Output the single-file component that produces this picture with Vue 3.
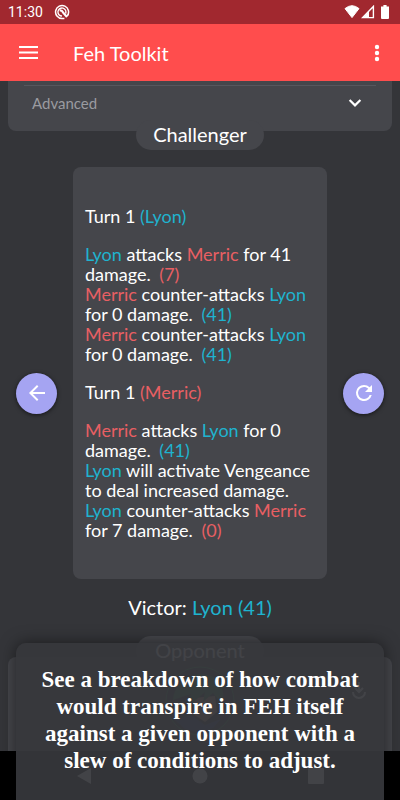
<script setup>
import { ref } from 'vue'

const challenger = 'Lyon'
const opponent = 'Merric'

const turns = ref([
  {
    id: 1,
    owner: challenger,
    actions: [
      { from: challenger, verb: 'attacks', to: opponent, damage: 41, left: opponent, hp: 7 },
      { from: opponent, verb: 'counter-attacks', to: challenger, damage: 0, left: challenger, hp: 41 },
      { from: opponent, verb: 'counter-attacks', to: challenger, damage: 0, left: challenger, hp: 41 }
    ]
  },
  {
    id: 2,
    owner: opponent,
    actions: [
      { from: opponent, verb: 'attacks', to: challenger, damage: 0, left: challenger, hp: 41 },
      { from: challenger, skill: 'Vengeance' },
      { from: challenger, verb: 'counter-attacks', to: opponent, damage: 7, left: opponent, hp: 0 }
    ]
  }
])

function heroClass(name) {
  return name === challenger ? 'ally' : 'foe'
}
</script>

<template>
  <div class="screen">
    <div class="status-bar">
      <span class="clock">11:30</span>
      <svg class="status-app" viewBox="0 0 16 16" width="16" height="16" fill="none" stroke="#fff">
        <path d="M13.2 12A6.5 6.5 0 1 0 8 14.5h2.4" stroke-width="1.5" />
        <path d="M11.6 9.6A4 4 0 1 0 8 12" stroke-width="1.4" />
        <path d="M5.6 6.4Q8 6 9 8.4L13 13" stroke-width="2.2" />
      </svg>
      <div class="status-icons">
        <svg viewBox="0 0 16 14" width="16" height="14" fill="#fff">
          <path d="M1 3.6Q8-2.2 15 3.6L8 12.6z" stroke="#fff" stroke-linejoin="round" />
        </svg>
        <svg viewBox="0 0 14 14" width="14" height="14" fill="none" stroke="#fff">
          <path d="M1.6 12.6h10.8V1.4z" stroke-width="1.4" />
          <path d="M8 12.6V6.2L2 12.6z" fill="#fff" stroke="none" />
        </svg>
        <svg class="battery" viewBox="0 0 8 14" width="8" height="14" fill="#fff">
          <path d="M2.4 0h3.2v1.6H8V13a1 1 0 0 1-1 1H1a1 1 0 0 1-1-1V1.6h2.4z" />
        </svg>
      </div>
    </div>

    <header class="app-bar">
      <button class="icon-button" aria-label="Menu">
        <svg viewBox="0 0 20 14" width="20" height="14" fill="#fff">
          <path d="M1 0h19v2H1zM1 5.5h19v2H1zM1 11h19v2H1z" />
        </svg>
      </button>
      <h1>Feh Toolkit</h1>
      <button class="icon-button" aria-label="More options">
        <svg viewBox="0 0 6 18" width="6" height="18" fill="#fff">
          <circle cx="3" cy="3" r="2.2" />
          <circle cx="3" cy="9" r="2.2" />
          <circle cx="3" cy="15" r="2.2" />
        </svg>
      </button>
    </header>

    <main>
      <section class="panel">
        <button class="advanced">
          <span>Advanced</span>
          <svg viewBox="0 0 14 10" width="14" height="10" fill="none" stroke="#fff" stroke-width="2.2">
            <path d="M1.6 2L7 7.4L12.4 2" />
          </svg>
        </button>
      </section>
      <h2 class="pill">Challenger</h2>

      <div class="battle">
        <button class="round-button" aria-label="Back">
          <svg viewBox="0 0 24 24" width="24" height="24" fill="#fff">
            <path d="M20 11H7.8l5.6-5.6L12 4l-8 8 8 8 1.4-1.4L7.8 13H20z" />
          </svg>
        </button>

        <div class="log">
          <div v-for="turn in turns" :key="turn.id" class="turn">
            <h3>Turn 1 <span :class="heroClass(turn.owner)">({{ turn.owner }})</span></h3>
            <p v-for="(action, i) in turn.actions" :key="i">
              <span :class="heroClass(action.from)">{{ action.from }}</span>
              <template v-if="action.skill">{{ ` will activate ${action.skill} to deal increased damage.` }}</template>
              <template v-else>
                {{ ` ${action.verb} ` }}
                <span :class="heroClass(action.to)">{{ action.to }}</span>
                for {{ action.damage }} damage.
                <span class="result" :class="heroClass(action.left)">({{ action.hp }})</span>
              </template>
            </p>
          </div>
        </div>

        <button class="round-button" aria-label="Restart">
          <svg viewBox="0 0 24 24" width="24" height="24" fill="#fff">
            <path d="M17.65 6.35A7.96 7.96 0 0 0 12 4a8 8 0 1 0 7.73 10h-2.08A6 6 0 1 1 12 6c1.66 0 3.14.69 4.22 1.78L13 11h7V4z" />
          </svg>
        </button>
      </div>

      <p class="victor">Victor: <span class="ally">Lyon (41)</span></p>

      <section class="panel opponent-panel">
        <h2 class="pill">Opponent</h2>
        <div class="opponent-row">
          <svg class="portrait" viewBox="0 0 70 70" width="70" height="70">
            <circle cx="35" cy="35" r="34" fill="#3c3d42" stroke="#3c9a58" stroke-width="1" />
            <path d="M28 32l22-2 2 16-12 10-12-8z" fill="#c89a84" />
            <path d="M8 34C10 14 30 4 46 10c12 5 14 18 11 28L48 27 38 36l2-10-16 14 2-12z" fill="#3f8a50" />
            <path d="M10 54l16-5 14 10 16-6-8 9-14 5-14-4z" fill="#3a4f88" />
          </svg>
          <svg class="download" viewBox="0 0 14 18" width="14" height="18" fill="none" stroke="#fff" stroke-width="2">
            <path d="M7 0v10M3 6l4 4 4-4M1 10a6 6 0 0 0 12 0" />
          </svg>
        </div>
      </section>
    </main>

    <nav class="nav-bar">
      <button aria-label="Navigate back">
        <svg viewBox="0 0 16 16" width="16" height="16" fill="#fff"><path d="M15 0v16L1 8z" /></svg>
      </button>
      <button aria-label="Home">
        <svg viewBox="0 0 16 16" width="16" height="16" fill="#fff"><circle cx="8" cy="8" r="7.5" /></svg>
      </button>
      <button aria-label="Recent apps">
        <svg viewBox="0 0 16 16" width="16" height="16" fill="#fff"><rect width="16" height="16" rx="1" /></svg>
      </button>
    </nav>

    <aside class="caption">
      <p>See a breakdown of how combat would transpire in FEH itself against a given opponent with a slew of conditions to adjust.</p>
    </aside>
  </div>
</template>

<style>
body {
  margin: 0;
  background-color: #343539;
}
</style>

<style scoped>
.screen {
  position: relative;
  display: flex;
  flex-direction: column;
  min-height: 100vh;
  overflow: hidden;
  background-color: #343539;
  color: #fff;
  font-family: Lato, 'Liberation Sans', sans-serif;
}

h1,
h2,
h3,
p {
  margin: 0;
  font-weight: normal;
}

button {
  display: flex;
  align-items: center;
  justify-content: center;
  padding: 0;
  border: none;
  background: none;
  color: inherit;
  font-family: inherit;
  cursor: pointer;
}

.status-bar {
  display: flex;
  align-items: center;
  height: 24px;
  padding: 0 11px 0 8px;
  background-color: #a1282f;
}

.clock {
  font-family: Roboto, sans-serif;
  font-size: 14px;
}

.status-app {
  margin-left: 11px;
}

.status-icons {
  display: flex;
  align-items: center;
  gap: 1px;
  margin-left: auto;
}

.battery {
  margin-left: 5px;
}

.app-bar {
  display: flex;
  align-items: center;
  height: 57px;
  padding: 0 8px;
  background-color: #ff4d4d;
}

.icon-button {
  width: 40px;
  height: 40px;
}

.icon-button:last-child {
  width: 30px;
}

.app-bar h1 {
  flex: 1;
  padding-left: 25px;
  font-size: 20px;
}

main {
  display: flex;
  flex: 1;
  flex-direction: column;
}

.panel {
  margin: 0 8px;
  padding: 4px 16px 12px;
  border-radius: 0 0 8px 8px;
  background-color: #45464b;
}

.advanced {
  width: 100%;
  height: 34px;
  justify-content: space-between;
  padding: 0 14px 0 8px;
  border-top: 1px solid #56575d;
  color: #9a9ba0;
  font-size: 15px;
}

.pill {
  align-self: center;
  min-width: 128px;
  height: 30px;
  box-sizing: border-box;
  margin-top: -11px;
  border-radius: 15px;
  background-color: #45464b;
  font-size: 20px;
  line-height: 28px;
  text-align: center;
}

.battle {
  display: flex;
  align-items: center;
  gap: 16px;
  margin-top: 17px;
  padding: 0 16px;
}

.round-button {
  flex: none;
  width: 41px;
  height: 41px;
  margin-top: 40px;
  border-radius: 50%;
  background-color: #a5a4f2;
  box-shadow: 0 1px 4px rgba(0, 0, 0, 0.6);
}

.log {
  display: flex;
  flex: 1;
  flex-direction: column;
  gap: 18px;
  padding: 39px 12px;
  border-radius: 8px;
  background-color: #45464b;
  font-size: 18px;
  line-height: 20px;
}

.turn h3 {
  margin-bottom: 18px;
  font-size: 18px;
}

.ally {
  color: #1fb3cf;
}

.foe {
  color: #e85f63;
}

.result {
  margin-left: 4px;
}

.victor {
  margin-top: 16px;
  font-size: 20px;
  line-height: 24px;
  text-align: center;
}

.opponent-panel {
  display: flex;
  flex: 1;
  flex-direction: column;
  margin-top: 38px;
  padding: 0 26px;
  border-radius: 8px 8px 0 0;
}

.opponent-panel .pill {
  margin-top: -21px;
}

.opponent-row {
  display: flex;
  align-items: flex-start;
}

.portrait {
  margin: 0 auto;
  padding-left: 14px;
}

.download {
  margin-top: 16px;
}

.nav-bar {
  display: flex;
  align-items: center;
  justify-content: space-around;
  height: 49px;
  padding: 0 26px;
  background-color: #000;
}

/* Caption lies over the lower part of the screen */
.caption {
  position: absolute;
  right: 16px;
  bottom: 0;
  left: 16px;
  padding: 23px 16px 26px;
  border-radius: 10px 10px 0 0;
  background-color: rgba(54, 55, 59, 0.94);
  box-shadow: 0 0 16px rgba(0, 0, 0, 0.5);
  font-family: 'Liberation Serif', serif;
  font-size: 23px;
  line-height: 27px;
  text-align: center;
}

.caption p {
  font-weight: bold;
}
</style>
